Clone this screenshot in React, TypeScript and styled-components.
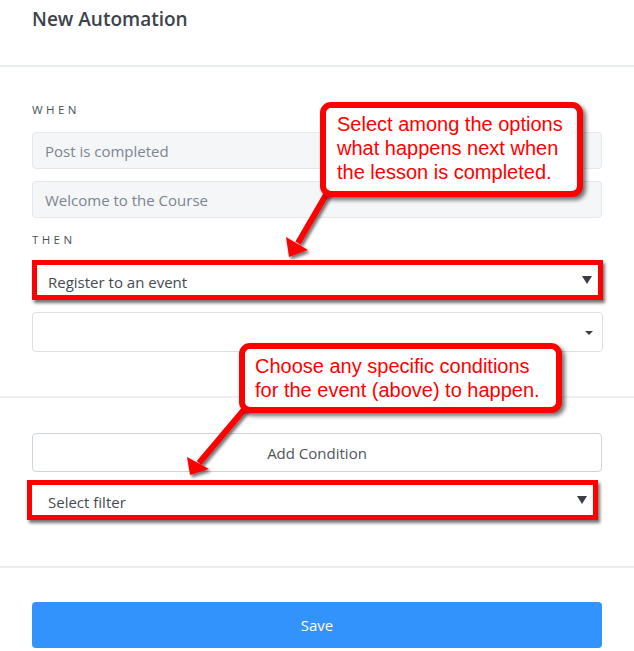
import React from 'react';
import styled, { createGlobalStyle } from 'styled-components';

const Global = createGlobalStyle`
  html, body { margin: 0; padding: 0; background: #ffffff; overflow: hidden; }
  body { font-family: "Open Sans", "Noto Sans", sans-serif; }
`;

const Page = styled.div`
  position: relative;
  width: 634px;
  height: 651px;
  overflow: hidden;
`;

const Header = styled.header`
  height: 67px;
  box-sizing: border-box;
  padding: 5px 32px 0;
  border-bottom: 2px solid #e9edf1;
`;

const Title = styled.h1`
  margin: 0;
  font-size: 19px;
  line-height: 28px;
  font-weight: 600;
  color: #3c434b;
`;

const FormSection = styled.section<{ $top: number; $bottom: number; $divider?: string }>`
  padding: ${(p) => p.$top}px 32px ${(p) => p.$bottom}px;
  border-bottom: ${(p) => (p.$divider ? `2px solid ${p.$divider}` : 'none')};
  display: flex;
  flex-direction: column;
`;

const Label = styled.div<{ $gapTop?: number; $gapBottom?: number }>`
  font-size: 11.5px;
  line-height: 16px;
  font-weight: 500;
  letter-spacing: 3.4px;
  color: #4b5158;
  margin-top: ${(p) => p.$gapTop ?? 0}px;
  margin-bottom: ${(p) => p.$gapBottom ?? 14}px;
`;

const Stack = styled.div<{ $gap: number }>`
  display: flex;
  flex-direction: column;
  gap: ${(p) => p.$gap}px;
`;

const ReadonlyField = styled.div`
  height: 37px;
  box-sizing: border-box;
  border: 1px solid #e4e7eb;
  background: #f5f6f8;
  border-radius: 4px;
  padding: 0 12px;
  display: flex;
  align-items: center;
  font-size: 15px;
  color: #7a8591;
`;

const SelectBox = styled.div<{ $highlight?: boolean; $nudge?: number }>`
  height: 40px;
  box-sizing: border-box;
  display: flex;
  align-items: center;
  justify-content: space-between;
  background: #ffffff;
  font-size: 15px;
  color: #444a50;
  margin-left: ${(p) => -(p.$nudge ?? 0)}px;
  margin-right: ${(p) => (p.$nudge ?? 0) - 1}px;
  padding: ${(p) => (p.$highlight ? `4px 6px 0 ${11 + (p.$nudge ?? 0)}px` : '0 9px 0 12px')};
  border: ${(p) => (p.$highlight ? '5px solid #ff0000' : '1px solid #dcdfe3')};
  border-radius: ${(p) => (p.$highlight ? '0' : '4px')};
  box-shadow: ${(p) => (p.$highlight ? '2px 3px 3px rgba(0,0,0,0.55)' : 'none')};
`;

const Caret = styled.span<{ $large?: boolean }>`
  width: 0;
  height: 0;
  border-left: ${(p) => (p.$large ? 5 : 4)}px solid transparent;
  border-right: ${(p) => (p.$large ? 5 : 4)}px solid transparent;
  border-top: ${(p) => (p.$large ? 8 : 4)}px solid #3a3f45;
  margin-top: ${(p) => (p.$large ? -4 : 2)}px;
`;

const OutlineButton = styled.button`
  height: 39px;
  box-sizing: border-box;
  width: 100%;
  border: 1px solid #ced4da;
  border-radius: 4px;
  background: #ffffff;
  font-family: inherit;
  font-size: 15px;
  color: #4f555b;
  padding: 0;
`;

const Footer = styled.footer`
  padding: 34px 32px 0;
`;

const PrimaryButton = styled.button`
  width: 100%;
  height: 46px;
  border: none;
  border-radius: 4px;
  background: #3193fb;
  color: #ffffff;
  font-family: inherit;
  font-size: 15px;
  padding: 0;
`;

const Callout = styled.div<{
  $left: number;
  $top: number;
  $width: number;
  $height: number;
  $padTop: number;
  $padLeft: number;
}>`
  position: absolute;
  left: ${(p) => p.$left}px;
  top: ${(p) => p.$top}px;
  width: ${(p) => p.$width}px;
  height: ${(p) => p.$height}px;
  box-sizing: border-box;
  border: 6px solid #ff0000;
  border-radius: 11px;
  background: #ffffff;
  box-shadow: 3px 3px 4px rgba(0, 0, 0, 0.55);
  padding: ${(p) => p.$padTop}px 6px 0 ${(p) => p.$padLeft}px;
  font-family: "Liberation Sans", Arial, sans-serif;
  font-size: 20px;
  line-height: 24px;
  color: #ff0000;
  white-space: nowrap;
  z-index: 3;
`;

const ArrowLayer = styled.svg`
  position: absolute;
  left: 0;
  top: 0;
  width: 634px;
  height: 651px;
  pointer-events: none;
  z-index: 2;
`;

function Arrow({ from, base, tip, left, right }: { from: [number, number]; base: [number, number]; tip: [number, number]; left: [number, number]; right: [number, number] }) {
  return (
    <g filter="url(#arrowShadow)">
      <line x1={from[0]} y1={from[1]} x2={base[0]} y2={base[1]} stroke="#ff0000" strokeWidth={6} />
      <polygon points={`${tip[0]},${tip[1]} ${left[0]},${left[1]} ${right[0]},${right[1]}`} fill="#ff0000" />
    </g>
  );
}

export default function App() {
  return (
    <Page>
      <Global />
      <Header>
        <Title>New Automation</Title>
      </Header>

      <FormSection $top={35} $bottom={44} $divider="#eeeff1">
        <Label>WHEN</Label>
        <Stack $gap={12}>
          <ReadonlyField>Post is completed</ReadonlyField>
          <ReadonlyField>Welcome to the Course</ReadonlyField>
        </Stack>
        <Label $gapTop={14} $gapBottom={12}>THEN</Label>
        <Stack $gap={12}>
          <SelectBox $highlight>
            <span>Register to an event</span>
            <Caret $large />
          </SelectBox>
          <SelectBox>
            <span />
            <Caret />
          </SelectBox>
        </Stack>
      </FormSection>

      <FormSection $top={35} $bottom={46} $divider="#ececec">
        <Stack $gap={8}>
          <OutlineButton type="button">Add Condition</OutlineButton>
          <SelectBox $highlight $nudge={5}>
            <span>Select filter</span>
            <Caret $large />
          </SelectBox>
        </Stack>
      </FormSection>

      <Footer>
        <PrimaryButton type="button">Save</PrimaryButton>
      </Footer>

      <ArrowLayer viewBox="0 0 634 651">
        <defs>
          <filter id="arrowShadow" x="-20%" y="-20%" width="160%" height="160%">
            <feDropShadow dx="2" dy="2.5" stdDeviation="1.5" floodColor="#000" floodOpacity="0.55" />
          </filter>
        </defs>
        <Arrow from={[330, 188]} base={[298, 243]} tip={[289, 257]} left={[286, 237]} right={[308, 250]} />
        <Arrow from={[248, 405]} base={[199, 463]} tip={[190, 475]} left={[187, 457]} right={[209, 469]} />
      </ArrowLayer>

      <Callout $left={320} $top={102} $width={263} $height={95} $padTop={4} $padLeft={11}>
        Select among the options
        <br />
        what happens next when
        <br />
        the lesson is completed.
      </Callout>
      <Callout $left={239} $top={343} $width={323} $height={70} $padTop={5} $padLeft={10}>
        Choose any specific conditions
        <br />
        for the event (above) to happen.
      </Callout>
    </Page>
  );
}
